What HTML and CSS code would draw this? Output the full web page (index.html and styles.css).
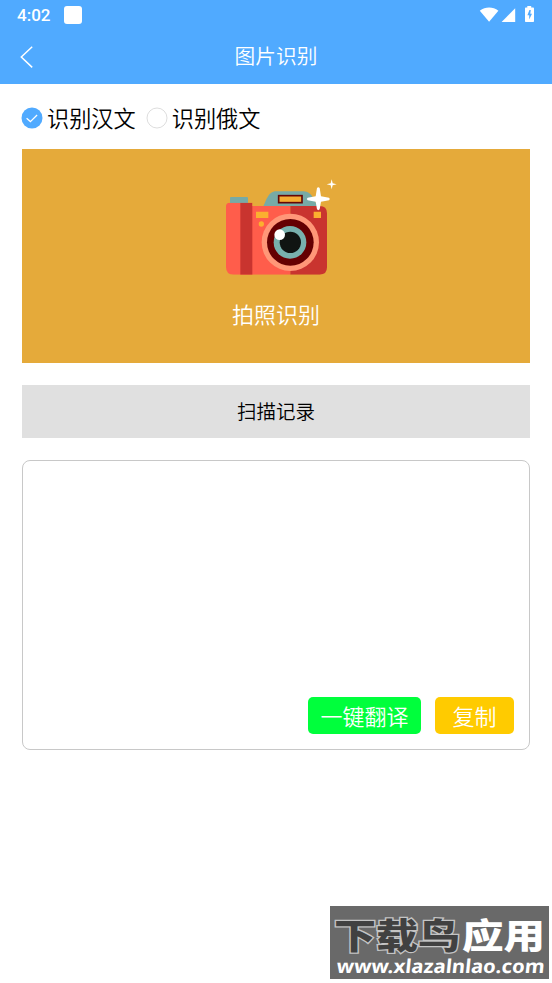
FILE: index.html
```html
<!DOCTYPE html>
<html lang="zh-CN">
<head>
<meta charset="utf-8">
<title>图片识别</title>
<link rel="stylesheet" href="styles.css">
</head>
<body>
<header class="header">
  <div class="status">
    <span class="time">4:02</span>
    <span class="app-dot"></span>
    <svg class="status-icons" width="58" height="18" viewBox="0 0 58 18" fill="#fff">
      <path d="M0.8 4.7C6.5.5 13.8.5 19.4 4.7L10.1 15.8Z"/>
      <path d="M36.2 2.3V16H22.6Z"/>
      <path d="M48.3 0H52.2V1.6H54.2Q55 1.6 55 2.4V15.2Q55 16 54.2 16H46.7Q46 16 46 15.2V2.4Q46 1.6 46.7 1.6H48.3Z"/>
      <path fill="#50aaff" d="M50.4 4H51.8L51.3 7.8H53L50.2 13.5V9.3H48.4Z"/>
    </svg>
  </div>
  <div class="navbar">
    <svg class="back" width="14" height="24" viewBox="0 0 14 24" fill="none" stroke="#fff" stroke-width="1.5"><path d="M12.2 1.8L1.3 12L12.2 22.4"/></svg>
    <h1 class="title">图片识别</h1>
  </div>
</header>
<main class="content">
  <div class="options">
    <label class="option"><svg width="22" height="22" viewBox="0 0 22 22"><circle cx="11" cy="11" r="10.5" fill="#50aaff"/><path d="M5.6 11.2L9.4 14.6L16.1 8" fill="none" stroke="#fff" stroke-width="1.3"/></svg><span>识别汉文</span></label>
    <label class="option"><svg width="22" height="22" viewBox="0 0 22 22"><circle cx="11" cy="11" r="10" fill="#fff" stroke="#d4d4d4" stroke-width=".8"/></svg><span>识别俄文</span></label>
  </div>
  <section class="capture">
    <svg class="camera" width="122" height="115" viewBox="0 0 366 345">
      <defs><clipPath id="body"><path d="M33 109Q33 98 44 98H112V108H314Q336 108 336 130V292Q336 314 314 314H56Q33 314 33 291Z"/></clipPath></defs>
      <rect x="45" y="81" width="54" height="24" rx="3" fill="#77aaa6"/>
      <path d="M145 109C153 96 158 64 184 64H266C292 64 298 96 309 109Z" fill="#77aaa6"/>
      <g clip-path="url(#body)">
        <path fill="#ff5d4b" d="M30 95H226V320H30Z"/>
        <path fill="#c9342f" d="M226 95H340V320H226ZM76 95H112V320H76Z"/>
      </g>
      <rect x="191" y="77" width="70" height="21" fill="#f5ad32" stroke="#640606" stroke-width="5"/>
      <path fill="#fbb02f" d="M123 125H160V144H123ZM296 125H318V144H296Z"/>
      <circle cx="139" cy="162" r="8" fill="#fbb02f"/>
      <circle cx="226" cy="217" r="86" fill="#ff9778"/>
      <circle cx="226" cy="217" r="70" fill="#650002"/>
      <circle cx="225" cy="217" r="49" fill="#78b0ad"/>
      <circle cx="226" cy="217" r="32" fill="#101412"/>
      <circle cx="194" cy="194" r="16" fill="#fff"/>
      <path fill="#fff" d="M306 54Q310 49 314 54L318 79L342 83Q347 87 342 91L318 95L314 118Q310 123 306 118L302 95L278 91Q273 87 278 83L302 79ZM350 28L353 40L365 43L353 46L350 58L347 46L335 43L347 40Z"/>
    </svg>
    <div class="capture-label">拍照识别</div>
  </section>
  <div class="history">扫描记录</div>
  <section class="result">
    <button class="btn translate">一键翻译</button>
    <button class="btn copy">复制</button>
  </section>
</main>
<svg class="watermark" width="219" height="73" viewBox="0 0 219 73">
  <rect width="219" height="73" fill="#696969"/>
  <g class="brand">
    <text class="brand-dark" x="4" y="43" textLength="126" lengthAdjust="spacingAndGlyphs">下载鸟</text>
    <text class="brand-light" x="132" y="43" textLength="83" lengthAdjust="spacingAndGlyphs">应用</text>
  </g>
  <text class="site" transform="translate(6 67) skewX(-6)" textLength="208" lengthAdjust="spacingAndGlyphs">www.xlazalnlao.com</text>
</svg>
</body>
</html>
```
FILE: styles.css
```css
* { box-sizing: border-box; }
body {
  position: relative;
  height: 983px;
  margin: 0;
  overflow: hidden;
  background: #fff;
  color: #000;
  font-family: "Noto Sans CJK SC", sans-serif;
  font-weight: 350;
}
.header { height: 83.5px; background: #50aaff; color: #fff; }
.status { display: flex; align-items: flex-start; height: 30px; padding: 6px 15px 0 17px; }
.time { width: 47px; font: 500 17px/19px Roboto, sans-serif; }
.app-dot { width: 18px; height: 18px; border-radius: 3px; background: #fff; }
.status-icons { margin-left: auto; }
.navbar { display: grid; grid-template-columns: 34px 1fr 34px; align-items: center; height: 53px; }
.back { margin: 1px 0 0 20px; }
.title { margin: -3px 0 0; text-align: center; font-size: 20.7px; font-weight: 350; line-height: 30px; }
.content { padding: 17.5px 22px 0; }
.options { display: flex; gap: 11px; height: 33px; margin-bottom: 15px; }
.option { display: flex; align-items: center; gap: 4px; font-size: 22.2px; line-height: 33px; }
.option svg { margin: 1px 0 0 -1px; }
.capture { display: flex; flex-direction: column; align-items: center; height: 214px; padding-top: 21px; background: #e5aa3a; color: #fff; }
.camera { flex: none; }
.capture-label { margin-top: 11.5px; font-size: 22px; line-height: 33px; }
.history { height: 53px; margin-top: 22px; background: #e0e0e0; text-align: center; font-size: 19.5px; line-height: 52px; }
.result { display: flex; justify-content: flex-end; align-items: flex-end; gap: 14px; height: 290px; margin-top: 22px; padding: 0 15px 15px; border: 1px solid #c8c8c8; border-radius: 8px; }
.btn { height: 37px; padding: 0; border: 0; border-radius: 5px; color: #fff; font: 350 22px/37px "Noto Sans CJK SC", sans-serif; }
.translate { width: 113px; background: #00ff3c; }
.copy { width: 79px; background: #ffcb00; }
.watermark { position: absolute; right: 3px; bottom: 4px; }
.brand { font: 900 35px "Noto Sans CJK SC", sans-serif; }
.brand-dark { fill: #414141; stroke: #c4c4c4; stroke-width: 2.5px; paint-order: stroke; }
.brand-light { fill: #fff; }
.site { fill: #fff; font: 700 19px "Noto Sans", sans-serif; }
```
